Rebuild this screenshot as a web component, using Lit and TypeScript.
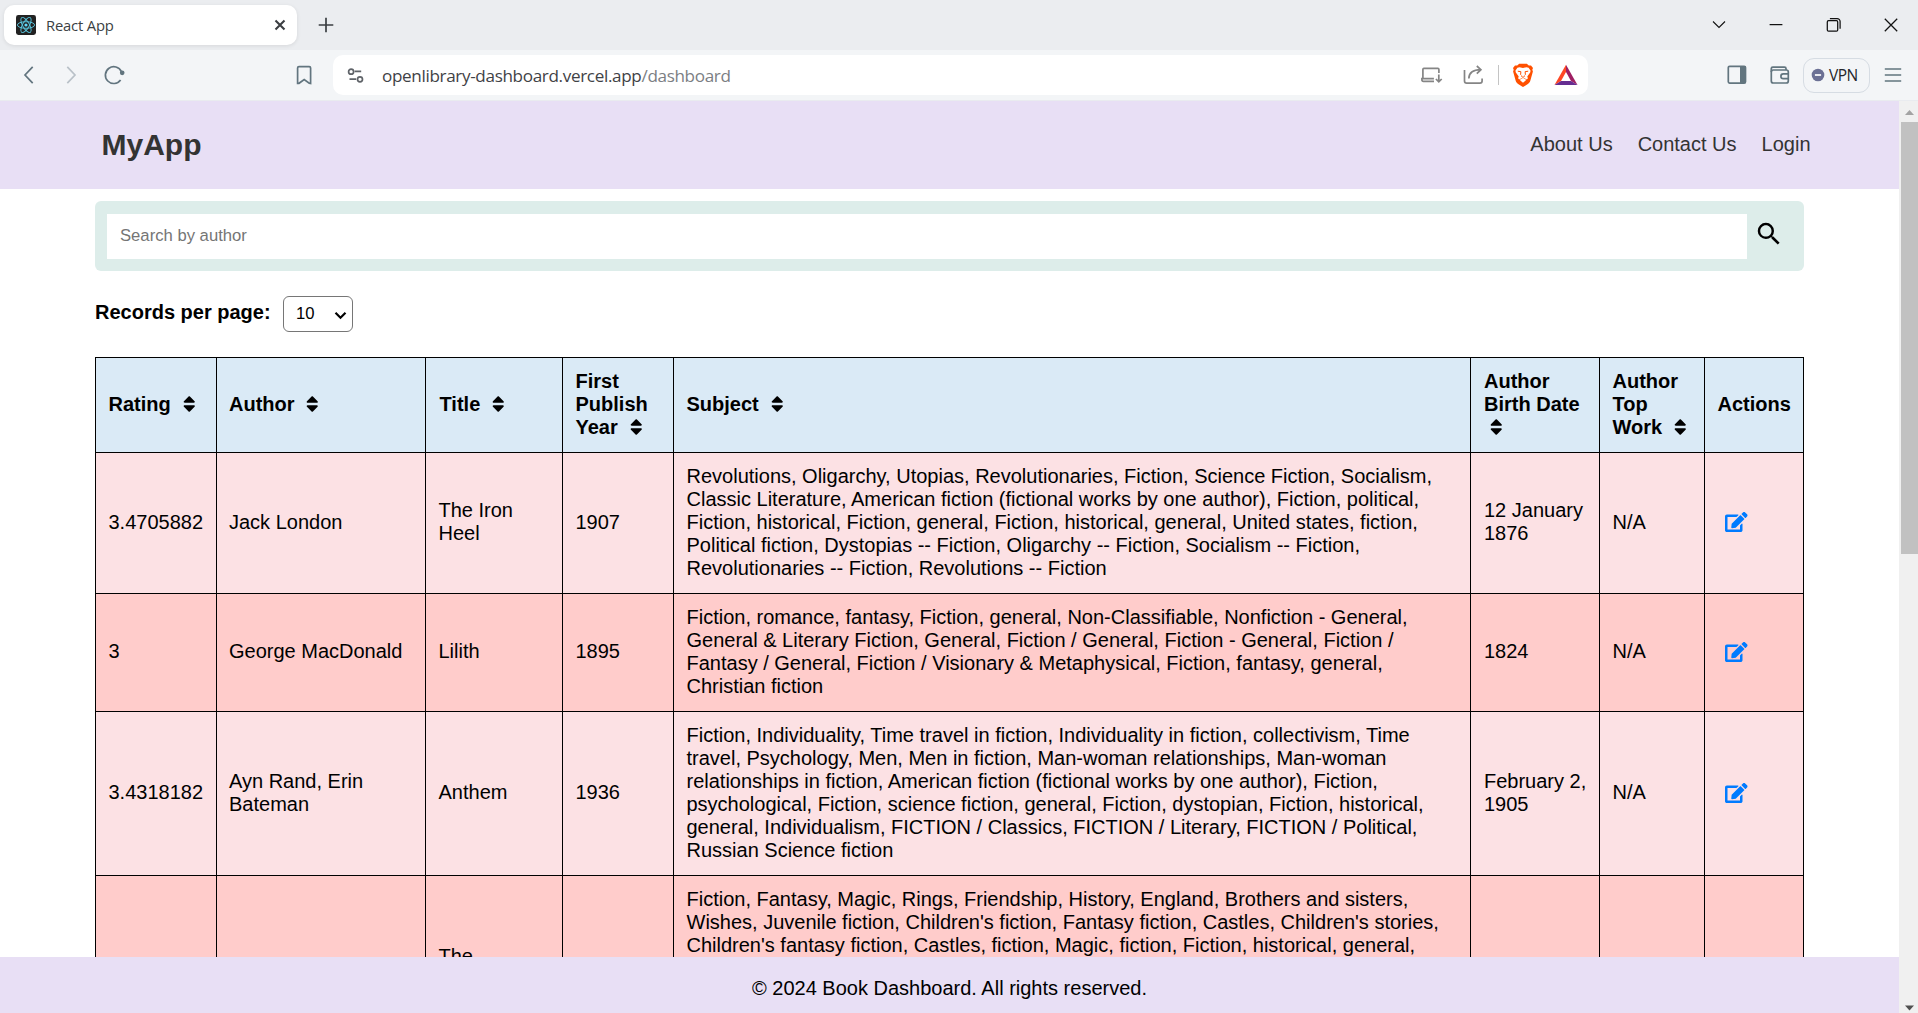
import { LitElement, html, svg, css } from "lit";
import { customElement } from "lit/decorators.js";

interface Book {
  rating: string;
  author: string;
  title: string;
  year: string;
  subject: string;
  born: string;
  work: string;
}

const BOOKS: Book[] = [
  {
    rating: "3.4705882",
    author: "Jack London",
    title: "The Iron Heel",
    year: "1907",
    subject:
      "Revolutions, Oligarchy, Utopias, Revolutionaries, Fiction, Science Fiction, Socialism, Classic Literature, American fiction (fictional works by one author), Fiction, political, Fiction, historical, Fiction, general, Fiction, historical, general, United states, fiction, Political fiction, Dystopias -- Fiction, Oligarchy -- Fiction, Socialism -- Fiction, Revolutionaries -- Fiction, Revolutions -- Fiction",
    born: "12 January 1876",
    work: "N/A",
  },
  {
    rating: "3",
    author: "George MacDonald",
    title: "Lilith",
    year: "1895",
    subject:
      "Fiction, romance, fantasy, Fiction, general, Non-Classifiable, Nonfiction - General, General & Literary Fiction, General, Fiction / General, Fiction - General, Fiction / Fantasy / General, Fiction / Visionary & Metaphysical, Fiction, fantasy, general, Christian fiction",
    born: "1824",
    work: "N/A",
  },
  {
    rating: "3.4318182",
    author: "Ayn Rand, Erin Bateman",
    title: "Anthem",
    year: "1936",
    subject:
      "Fiction, Individuality, Time travel in fiction, Individuality in fiction, collectivism, Time travel, Psychology, Men, Men in fiction, Man-woman relationships, Man-woman relationships in fiction, American fiction (fictional works by one author), Fiction, psychological, Fiction, science fiction, general, Fiction, dystopian, Fiction, historical, general, Individualism, FICTION / Classics, FICTION / Literary, FICTION / Political, Russian Science fiction",
    born: "February 2, 1905",
    work: "N/A",
  },
];

const COLUMNS = [
  "Rating",
  "Author",
  "Title",
  "First Publish Year",
  "Subject",
  "Author Birth Date",
  "Author Top Work",
];

const sortIcon = html`<svg class="sort" viewBox="0 0 320 512">
  <path d="M41 288h238c21.4 0 32.1 25.9 17 41L177 448c-9.4 9.4-24.6 9.4-33.9 0L24 329c-15.1-15.1-4.4-41 17-41zm255-105L177 64c-9.4-9.4-24.6-9.4-33.9 0L24 183c-15.1 15.1-4.4 41 17 41h238c21.4 0 32.1-25.9 17-41z"/>
</svg>`;

const editIcon = html`<svg class="edit" viewBox="0 0 576 512">
  <path d="M402.6 83.2l90.2 90.2c3.8 3.8 3.8 10 0 13.8L274.4 405.6l-92.8 10.3c-12.4 1.4-22.9-9.1-21.5-21.5l10.3-92.8L388.8 83.2c3.8-3.8 10-3.8 13.8 0zm162-22.9l-48.8-48.8c-15.2-15.2-39.9-15.2-55.2 0l-35.4 35.4c-3.8 3.8-3.8 10 0 13.8l90.2 90.2c3.8 3.8 10 3.8 13.8 0l35.4-35.4c15.2-15.3 15.2-40 0-55.2zM384 346.2V448H64V128h229.8c3.2 0 6.2-1.3 8.5-3.5l40-40c7.6-7.6 2.2-20.5-8.5-20.5H48C21.5 64 0 85.5 0 112v352c0 26.5 21.5 48 48 48h352c26.5 0 48-21.5 48-48V306.2c0-10.7-12.9-16-20.5-8.5l-40 40c-2.2 2.3-3.5 5.3-3.5 8.5z"/>
</svg>`;

// Line icon on a 24-unit grid drawn at 24px.
const icon = (cls: string, body: unknown) =>
  html`<svg class="ico ${cls}" viewBox="0 0 24 24">${body}</svg>`;

@customElement("browser-chrome")
export class BrowserChrome extends LitElement {
  static styles = css`
    :host {
      display: block;
      height: 101px;
      font-family: "Open Sans", "Noto Sans", sans-serif;
    }
    .strip {
      height: 50px;
      display: flex;
      align-items: center;
      background: #ebedf0;
      box-sizing: border-box;
      padding-left: 4px;
    }
    .tab {
      width: 293px;
      height: 40px;
      box-sizing: border-box;
      padding: 0 9px 0 12px;
      border-radius: 10px;
      background: #fff;
      box-shadow: 0 1px 4px rgba(0, 0, 0, 0.09);
      display: flex;
      align-items: center;
    }
    .fav {
      width: 20px;
      height: 20px;
      display: block;
    }
    .name {
      margin-left: 10px;
      flex: 1;
      font-size: 14.8px;
      letter-spacing: -0.18px;
      color: #3c3f43;
      white-space: nowrap;
    }
    .ico {
      width: 24px;
      height: 24px;
      flex: none;
      display: block;
      fill: none;
      stroke: #62757f;
      stroke-width: 1.7;
    }
    .x { stroke: #3b3e42; stroke-width: 2.1; margin-right: -4px; }
    .plus { stroke: #3b3e42; margin-left: 17px; }
    .win { stroke: #111; stroke-width: 1.25; margin-right: 33.3px; }
    .chev { margin-left: auto; stroke-width: 1.1; }
    .close { margin-right: 15px; }
    .bar {
      height: 50px;
      display: flex;
      align-items: center;
      background: #f3f5f7;
      border-bottom: 1px solid #e9ebef;
      padding-left: 17px;
    }
    .fwd { margin-left: 18px; stroke: #b9c1c8; }
    .reload { margin-left: 18.5px; }
    .mark { margin-left: 166.5px; }
    .url {
      margin-left: 17px;
      width: 1255px;
      height: 40px;
      border-radius: 10px;
      background: #fff;
      display: flex;
      align-items: center;
      box-sizing: border-box;
      padding: 0 10.2px 0 10px;
    }
    .tune { stroke: #5f6368; }
    .addr {
      margin-left: 15px;
      font-size: 17.1px;
      letter-spacing: -0.34px;
      color: #3f4246;
      flex: 1;
      white-space: nowrap;
    }
    .path { color: #7b7e83; }
    .grey { stroke: #858585; }
    .share { margin-left: 18px; }
    .sep { width: 1px; height: 20px; background: #c4c4c4; margin: 0 12px 0 13px; }
    .tri { margin-left: 19px; stroke: none; }
    .side { margin-left: 136.5px; }
    .wallet { margin-left: 19px; }
    .vpn {
      margin-left: 11.5px;
      width: 67px;
      height: 35px;
      box-sizing: border-box;
      border: 1.5px solid #d6dce3;
      border-radius: 11px;
      display: flex;
      align-items: center;
      padding-left: 2px;
      font-size: 15.5px;
      letter-spacing: -0.55px;
      color: #24262a;
    }
    .vpn .ico { margin-right: -1px; }
    .menu { margin-left: 11px; }
  `;

  render() {
    return html`
      <div class="strip">
        <div class="tab">
          <svg class="fav" viewBox="0 0 20 20">
            <rect width="20" height="20" rx="2.4" fill="#222" />
            <g fill="none" stroke="#58c4dc" stroke-width=".95">
              <ellipse cx="10" cy="10" rx="8.6" ry="3.3" />
              <ellipse cx="10" cy="10" rx="8.6" ry="3.3" transform="rotate(60 10 10)" />
              <ellipse cx="10" cy="10" rx="8.6" ry="3.3" transform="rotate(120 10 10)" />
            </g>
            <circle cx="10" cy="10" r="1.6" fill="#61dafb" />
          </svg>
          <span class="name">React App</span>
          ${icon("x", svg`<path d="M7.5 7.5l9 9M16.5 7.5l-9 9"/>`)}
        </div>
        ${icon("plus", svg`<path d="M12 4.7v14.6M4.7 12h14.6"/>`)}
        ${icon("win chev", svg`<path d="M6 8.5l6 6 6-6"/>`)}
        ${icon("win", svg`<path d="M5.6 11.6h12.8"/>`)}
        ${icon("win", svg`<rect x="5.3" y="7.7" width="10.4" height="10.4" rx="1.2"/><path d="M7.9 5.500h7.2a3 3 0 0 1 3 3v7.300"/>`)}
        ${icon("win close", svg`<path d="M5.8 5.8l12.4 12.4M18.2 5.8L5.8 18.2"/>`)}
      </div>
      <div class="bar">
        ${icon("back", svg`<path d="M15.7 3.8L8 12l7.7 8.2"/>`)}
        ${icon("fwd", svg`<path d="M8.3 3.8L16 12l-7.7 8.2"/>`)}
        ${icon("reload", svg`<path d="M19.4 8.6A8.4 8.4 0 1 0 18.6 17"/><circle cx="20.2" cy="9.8" r="1.5" fill="#62757f"/>`)}
        ${icon("mark", svg`<path d="M5.6 5a1.4 1.4 0 0 1 1.4-1.4h10.2A1.4 1.4 0 0 1 18.6 5v15.4l-1.4-.2-5-3.7-5.2 3.8-1.4.1z"/>`)}
        <div class="url">
          ${icon("tune", svg`<circle cx="8.1" cy="8.7" r="2.5"/><path d="M11.6 8.4h6.6M6.5 16.2h6.7"/><circle cx="17" cy="16.3" r="2.5"/>`)}
          <span class="addr">openlibrary-dashboard.vercel.app<span class="path">/dashboard</span></span>
          ${icon("grey lap", svg`<path d="M3.9 15V6.4a1 1 0 0 1 1-1h14a1 1 0 0 1 1 1V10M15 18.4H4.4a1.6 1.6 0 0 1-1.5-1.7V15.600h12M19.800 11.500v7M16.900 16l2.900 2.900 2.900-2.900"/>`)}
          ${icon("grey share", svg`<path d="M3.500 7v11a2.200 2.200 0 0 0 2.200 2.200h13.200a2.200 2.200 0 0 0 2.200-2.200v-2.500M7.800 15.500c.2-5.500 3.600-8.700 12-8.800M15.800 3l4.100 3.700-4.100 4"/>`)}
          <span class="sep"></span>
          <svg class="ico" viewBox="0 0 24 24">
            <path fill="#ff5000" stroke="none" d="M8.200.8h7.600l2 1.700 2.200-.1 2 2.600-.7 1.800.6 1.700-2.600 9.300c-.4 1.500-1.200 2.300-2.400 3.100L12.900 23.600c-.6.4-1.200.4-1.800 0L7.100 20.900c-1.200-.8-2-1.600-2.400-3.100L2.100 8.500l.6-1.700L2 5l2-2.600 2.200.1z" />
            <path fill="#fff" stroke="none" d="M8.500 4.200L12 5l3.500-.8 2.100.6 1.900 2.700-.2 1.700-3 4.200.6 1.800-1 1.200-2.300-1.200h-3.200l-2.300 1.200-1-1.200.6-1.800-3-4.200-.2-1.700 1.900-2.700zM9 16.600l3-1.400 3 1.400-.3.900-2.700 2.200-2.700-2.200z" />
            <path fill="none" stroke="#ff5000" stroke-width="1" d="M6.800 8.200l3.100.5M17.200 8.200l-3.100.5M9.900 8.700l-.3 2.800 1 1M14.100 8.700l.3 2.800-1 1M10.400 13.400l1.600.9 1.600-.9" />
          </svg>
          <svg class="ico tri" viewBox="0 0 24 24">
            <path fill="#ff4724" d="M12 1.700L.5 21.900 7 18 12 9z" />
            <path fill="#9e1f63" d="M12 1.700l11.500 20.200L17 18 12 9z" />
            <path fill="#662d91" d="M.5 21.900h23L17 18H7z" />
          </svg>
        </div>
        ${icon("side", svg`<rect x="3.300" y="3.300" width="17.200" height="16.800" rx="1.300"/><path fill="#62757f" stroke="none" d="M15 3.300h6v17h-6z"/>`)}
        ${icon("wallet", svg`<rect x="3.300" y="7" width="17" height="13" rx="2"/><path d="M3.300 9V5.600a1.500 1.500 0 0 1 1.500-1.500H16.500a1.500 1.500 0 0 1 1.500 1.500V7M20.300 10.800h-5a2.300 2.300 0 0 0 0 4.800h5"/>`)}
        <div class="vpn">
          ${icon("", svg`<circle cx="12" cy="12" r="6.300" fill="#6b7094" stroke="none"/><path stroke="#fff" d="M8.900 12h6.200"/>`)}
          <span>VPN</span>
        </div>
        ${icon("menu", svg`<path d="M3.800 6h16.400M3.800 12h16.400M3.800 18h16.400" stroke-width="1.500"/>`)}
      </div>
    `;
  }
}

@customElement("book-table")
export class BookTable extends LitElement {
  static styles = css`
    :host { display: block; }
    table {
      width: 1709px;
      table-layout: fixed;
      border-collapse: separate;
      border-spacing: 0;
      border-top: 1px solid #000;
      border-left: 1px solid #000;
      font-size: 20px;
      line-height: 23px;
    }
    th, td {
      box-sizing: border-box;
      padding: 11.5px 12px 13.5px 12.5px;
      border-right: 1px solid #000;
      border-bottom: 1px solid #000;
      text-align: left;
      vertical-align: middle;
    }
    th { background: #daeaf6; }
    td { background: #fce1e4; }
    .even td { background: #ffcccb; }
    th:nth-child(2), td:nth-child(2) { padding-left: 12px; }
    th:nth-child(3) { padding-left: 13.5px; }
    th:nth-child(6), td:nth-child(6) { padding-left: 13px; }
    .last td { height: 209px; vertical-align: top; }
    .last .mid { padding-top: 69px; }
    .c0 { width: 121px; }
    .c1 { width: 209px; }
    .c2 { width: 137px; }
    .c3 { width: 111px; }
    .c4 { width: 797px; }
    .c5 { width: 129px; }
    .c6 { width: 105px; }
    .c7 { width: 99px; }
    .sort {
      width: 12.5px;
      height: 20px;
      margin-left: 6.25px;
      vertical-align: -3px;
    }
    .edit {
      display: block;
      width: 22.5px;
      height: 20px;
      margin-left: 7.5px;
      fill: #007bff;
    }
  `;

  render() {
    return html`
      <table>
        <colgroup>
          ${[0, 1, 2, 3, 4, 5, 6, 7].map((i) => html`<col class="c${i}" />`)}
        </colgroup>
        <thead>
          <tr>
            ${COLUMNS.map((c) => html`<th>${c} ${sortIcon}</th>`)}
            <th>Actions</th>
          </tr>
        </thead>
        <tbody>
          ${BOOKS.map(
            (b, i) => html`<tr class=${i % 2 ? "even" : "odd"}>
              <td>${b.rating}</td>
              <td>${b.author}</td>
              <td>${b.title}</td>
              <td>${b.year}</td>
              <td>${b.subject}</td>
              <td>${b.born}</td>
              <td>${b.work}</td>
              <td>${editIcon}</td>
            </tr>`
          )}
          <tr class="even last">
            <td></td>
            <td></td>
            <td class="mid">The</td>
            <td></td>
            <td>Fiction, Fantasy, Magic, Rings, Friendship, History, England, Brothers and sisters, Wishes, Juvenile fiction, Children's fiction, Fantasy fiction, Castles, Children's stories, Children's fantasy fiction, Castles, fiction, Magic, fiction, Fiction, historical, general,</td>
            <td></td>
            <td></td>
            <td></td>
          </tr>
        </tbody>
      </table>
    `;
  }
}

@customElement("app-root")
export class AppRoot extends LitElement {
  static styles = css`
    :host {
      display: flex;
      flex-direction: column;
      width: 1918px;
      height: 1013px;
      overflow: hidden;
      background: #fff;
      color: #000;
      font-family: "Liberation Sans", Arial, sans-serif;
    }
    .view { flex: 1; display: flex; min-height: 0; }
    .page { width: 1899px; display: flex; flex-direction: column; min-height: 0; }
    header {
      height: 88px;
      flex: none;
      box-sizing: border-box;
      background: #e8dff5;
      color: #333;
      display: flex;
      align-items: center;
      justify-content: space-between;
      padding: 0 88.5px 0 101.5px;
    }
    .brand { font-size: 30px; font-weight: 700; }
    nav { display: flex; gap: 25px; font-size: 20px; padding-bottom: 2px; }
    main {
      flex: 1;
      min-height: 0;
      overflow: hidden;
      padding: 12px 95px 0;
    }
    .search {
      height: 70px;
      box-sizing: border-box;
      display: flex;
      align-items: flex-start;
      padding: 13px 12px 12px;
      border-radius: 6px;
      background: #ddedea;
    }
    .field {
      width: 1640px;
      height: 45px;
      box-sizing: border-box;
      padding: 0 13px 2px;
      background: #fff;
      color: #757575;
      font-size: 16.67px;
      display: flex;
      align-items: center;
    }
    .glass { width: 30px; height: 30px; margin: 5px 0 0 6.500px; }
    .records {
      display: flex;
      align-items: flex-start;
      margin-top: 25px;
      height: 61px;
      font-size: 20px;
    }
    .label { font-weight: 700; line-height: 23px; margin-top: 5px; width: 188px; white-space: nowrap; }
    .select {
      width: 70px;
      height: 36px;
      box-sizing: border-box;
      border: 1px solid #767676;
      border-radius: 6px;
      display: flex;
      align-items: center;
      justify-content: space-between;
      padding: 0 5px 0 12px;
      font-size: 16.67px;
    }
    .arrow { width: 13px; height: 9px; fill: none; stroke: #000; stroke-width: 2.200; margin-top: 2px; }
    footer {
      height: 56px;
      flex: none;
      box-sizing: border-box;
      padding-top: 6px;
      background: #e8dff5;
      font-size: 20px;
      display: flex;
      align-items: center;
      justify-content: center;
    }
    .scroll {
      width: 19px;
      background: #f0f0f0;
      display: flex;
      flex-direction: column;
      align-items: flex-end;
    }
    .up { height: 21px; width: 17px; }
    .thumb { height: 432px; width: 17px; background: #c1c1c1; }
    .down { height: 21px; width: 17px; margin-top: auto; }
  `;

  render() {
    return html`
      <browser-chrome></browser-chrome>
      <div class="view">
        <div class="page">
          <header>
            <span class="brand">MyApp</span>
            <nav><span>About Us</span><span>Contact Us</span><span>Login</span></nav>
          </header>
          <main>
            <div class="search">
              <div class="field">Search by author</div>
              <svg class="glass" viewBox="0 0 24 24">
                <path d="M15.500 14h-.79l-.28-.27A6.471 6.471 0 0 0 16 9.500 6.500 6.500 0 1 0 9.500 16c1.610 0 3.090-.59 4.230-1.570l.27.28v.79l5 4.990L20.490 19l-4.990-5zm-6 0C7.010 14 5 11.990 5 9.500S7.010 5 9.500 5 14 7.010 14 9.500 11.990 14 9.500 14z" />
              </svg>
            </div>
            <div class="records">
              <span class="label">Records per page:</span>
              <div class="select">
                <span>10</span>
                <svg class="arrow" viewBox="0 0 13 9"><path d="M1.500 1.800l5 4.900 5-4.900" /></svg>
              </div>
            </div>
            <book-table></book-table>
          </main>
          <footer>© 2024 Book Dashboard. All rights reserved.</footer>
        </div>
        <div class="scroll">
          <svg class="up" viewBox="0 0 17 21"><path fill="#a3a3a3" d="M4 14l4.500-5 4.500 5z" /></svg>
          <div class="thumb"></div>
          <svg class="down" viewBox="0 0 17 21"><path fill="#505050" d="M4 13.500h9l-4.500 5z" /></svg>
        </div>
      </div>
    `;
  }
}
